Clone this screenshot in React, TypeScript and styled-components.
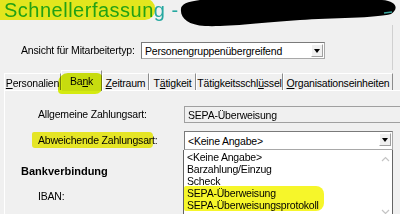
import React from "react";
import styled, { createGlobalStyle } from "styled-components";

const Global = createGlobalStyle`
  html, body { margin: 0; padding: 0; background: #f0f0f0; }
  * { box-sizing: border-box; }
`;

const Root = styled.div`
  width: 400px;
  height: 214px;
  overflow: hidden;
  background: #f0f0f0;
  position: relative;
  font-family: "Liberation Sans", Arial, sans-serif;
  font-size: 10.5px;
  letter-spacing: -0.2px;
  color: #000;
  display: flex;
  flex-direction: column;
`;

const TitleBar = styled.div`
  height: 25px;
  position: relative;
  padding-left: 4px;
  display: flex;
  align-items: flex-start;
`;

const Title = styled.h1`
  margin: 0;
  font-weight: normal;
  font-size: 20px;
  letter-spacing: 0.5px;
  line-height: 21px;
  color: #25a8a0;
  white-space: nowrap;
`;

const Mark = styled.span`
  position: relative;
`;

const Highlighter = styled.span<{ $color: string }>`
  position: absolute;
  background: ${(p) => p.$color};
  mix-blend-mode: multiply;
  pointer-events: none;
`;

const Redaction = styled.svg`
  position: absolute;
  left: 0;
  top: 0;
`;

const HeaderRow = styled.div`
  display: flex;
  padding: 17px 0 0 21px;
  height: 45px;
  border-right: 1px solid #d0d0d0;
  width: 393px;
  align-items: flex-start;
`;

const Label = styled.span<{ $width?: number }>`
  display: inline-block;
  flex-shrink: 0;
  width: ${(p) => (p.$width ? `${p.$width}px` : "auto")};
  white-space: nowrap;
  line-height: 17px;
`;

const Select = styled.div<{ $width: number; $height: number }>`
  position: relative;
  flex-shrink: 0;
  width: ${(p) => p.$width}px;
  height: ${(p) => p.$height}px;
  background: #fff;
  border: 1px solid #7a7a7a;
  border-right-color: #a8a8a8;
  border-bottom-color: #a8a8a8;
  display: flex;
  align-items: center;
  padding-left: 3px;
  white-space: nowrap;
`;

const ArrowButton = styled.span`
  position: absolute;
  right: 1px;
  top: 1px;
  width: 12px;
  height: 13px;
  background: #f0f0f0;
  border: 1px solid #fff;
  border-right-color: #a0a0a0;
  border-bottom-color: #a0a0a0;
  display: flex;
  align-items: center;
  justify-content: center;
  &::after {
    content: "";
    border-left: 3.5px solid transparent;
    border-right: 3.5px solid transparent;
    border-top: 4px solid #000;
  }
`;

const TabStrip = styled.div`
  display: flex;
  align-items: flex-end;
  height: 20px;
  padding-left: 4px;
  position: relative;
  z-index: 1;
`;

const Tab = styled.div<{ $width: number; $active?: boolean }>`
  position: relative;
  flex-shrink: 0;
  width: ${(p) => p.$width}px;
  height: ${(p) => (p.$active ? 21 : 17)}px;
  margin-bottom: ${(p) => (p.$active ? -1 : 0)}px;
  border-top: 1px solid #fff;
  border-left: 1px solid #fff;
  border-right: 1px solid #8c8c8c;
  background: #f0f0f0;
  display: flex;
  align-items: center;
  justify-content: center;
  padding-top: ${(p) => (p.$active ? 0 : 1)}px;
  white-space: nowrap;
  u { text-decoration: underline; text-underline-offset: 1px; }
`;

const Panel = styled.div`
  flex: 1;
  margin-left: 4px;
  border-top: 1px solid #fff;
  border-left: 1px solid #fff;
  padding-top: 15px;
  display: flex;
  flex-direction: column;
`;

const FormRow = styled.div<{ $gap?: number }>`
  display: flex;
  align-items: center;
  margin-top: ${(p) => p.$gap ?? 0}px;
`;

const LabelCell = styled.div`
  width: 179px;
  flex-shrink: 0;
  padding-left: 33px;
  display: flex;
  align-items: center;
`;

const MarkedLabel = styled.span`
  position: relative;
  white-space: nowrap;
  line-height: 17px;
`;

const ReadOnlyBox = styled.div`
  width: 230px;
  flex-shrink: 0;
  height: 17px;
  background: #f0f0f0;
  border: 1px solid #a0a0a0;
  border-right: none;
  display: flex;
  align-items: center;
  padding-left: 3px;
  white-space: nowrap;
`;

const ComboWrap = styled.div`
  position: relative;
  flex-shrink: 0;
`;

const DropList = styled.div`
  position: absolute;
  left: -1px;
  top: 100%;
  width: 210px;
  height: 70px;
  background: #fff;
  border: 1px solid #646464;
  border-top: none;
  padding-top: 1px;
  z-index: 5;
`;

const ListItem = styled.div`
  height: 12px;
  line-height: 12px;
  padding-left: 3px;
  white-space: nowrap;
`;

const ScrollBar = styled.div`
  position: absolute;
  right: 0;
  top: 0;
  bottom: 0;
  width: 14px;
  display: flex;
  flex-direction: column;
  justify-content: space-between;
  align-items: center;
  padding: 6px 0 4px;
`;

const SectionTitle = styled.div`
  font-weight: bold;
  font-size: 11px;
  letter-spacing: 0;
  line-height: 13px;
  margin: 15px 0 0 16px;
`;

const PlainLabel = styled.div`
  line-height: 13px;
  margin: 12px 0 0 33px;
`;

const Chevron = ({ up }: { up?: boolean }) => (
  <svg width="9" height="6" viewBox="0 0 9 6">
    <path
      d={up ? "M1 5 L4.5 1.5 L8 5" : "M1 1 L4.5 4.5 L8 1"}
      fill="none"
      stroke="#c4c4c4"
      strokeWidth="1.2"
    />
  </svg>
);

export default function App() {
  return (
    <Root>
      <Global />
      <TitleBar>
        <Title>
          <Mark>
            Schnellerfassun
            <Highlighter
              $color="#f2f51e"
              style={{ left: -4, right: -1, top: 0, height: 21, borderRadius: "0 9px 10px 0" }}
            />
          </Mark>
          g -
        </Title>
        <Redaction width="400" height="30" viewBox="0 0 400 30">
          <path
            d="M181 9 C181 1 200 -2 240 -1 L382 0 C397 1 399 9 391 14 C378 18 330 18 300 20 C260 23 225 27 205 26 C188 25 180 18 181 9 Z"
            fill="#000"
          />
          <path d="M384 13 L392 12" stroke="#3aa59d" strokeWidth="1.5" />
        </Redaction>
      </TitleBar>

      <HeaderRow>
        <Label $width={120}>Ansicht für Mitarbeitertyp:</Label>
        <Select $width={184} $height={17}>
          Personengruppenübergreifend
          <ArrowButton />
        </Select>
      </HeaderRow>

      <TabStrip>
        <Tab $width={57}><span><u>P</u>ersonalien</span></Tab>
        <Tab $width={41} $active>
          <span>Ba<u>n</u>k</span>
          <Highlighter
            $color="#d4ea10"
            style={{ left: -4, top: 2, width: 45, height: 21, borderRadius: "10px 6px 8px 4px" }}
          />
        </Tab>
        <Tab $width={47}><span><u>Z</u>eitraum</span></Tab>
        <Tab $width={47}><span>T<u>ä</u>tigkeit</span></Tab>
        <Tab $width={87}><span>Tätigkeitsschl<u>ü</u>ssel</span></Tab>
        <Tab $width={110}><span><u>O</u>rganisationseinheiten</span></Tab>
      </TabStrip>

      <Panel>
        <FormRow>
          <LabelCell><Label>Allgemeine Zahlungsart:</Label></LabelCell>
          <ReadOnlyBox>SEPA-Überweisung</ReadOnlyBox>
        </FormRow>
        <FormRow $gap={8}>
          <LabelCell>
            <MarkedLabel>
              Abweichende Zahlungsart:
              <Highlighter
                $color="#f4f428"
                style={{ left: -6, top: 0, width: 121, height: 16, borderRadius: "2px 4px 4px 3px" }}
              />
            </MarkedLabel>
          </LabelCell>
          <ComboWrap>
            <Select $width={209} $height={19}>
              &lt;Keine Angabe&gt;
              <ArrowButton />
            </Select>
            <DropList>
              <ListItem>&lt;Keine Angabe&gt;</ListItem>
              <ListItem>Barzahlung/Einzug</ListItem>
              <ListItem>Scheck</ListItem>
              <ListItem>SEPA-Überweisung</ListItem>
              <ListItem>SEPA-Überweisungsprotokoll</ListItem>
              <ScrollBar>
                <Chevron up />
                <Chevron />
              </ScrollBar>
              <Highlighter
                $color="#f6f62a"
                style={{ left: 0, top: 36, width: 140, height: 25, borderRadius: "2px 8px 8px 2px" }}
              />
            </DropList>
          </ComboWrap>
        </FormRow>
        <SectionTitle>Bankverbindung</SectionTitle>
        <PlainLabel>IBAN:</PlainLabel>
      </Panel>
    </Root>
  );
}
